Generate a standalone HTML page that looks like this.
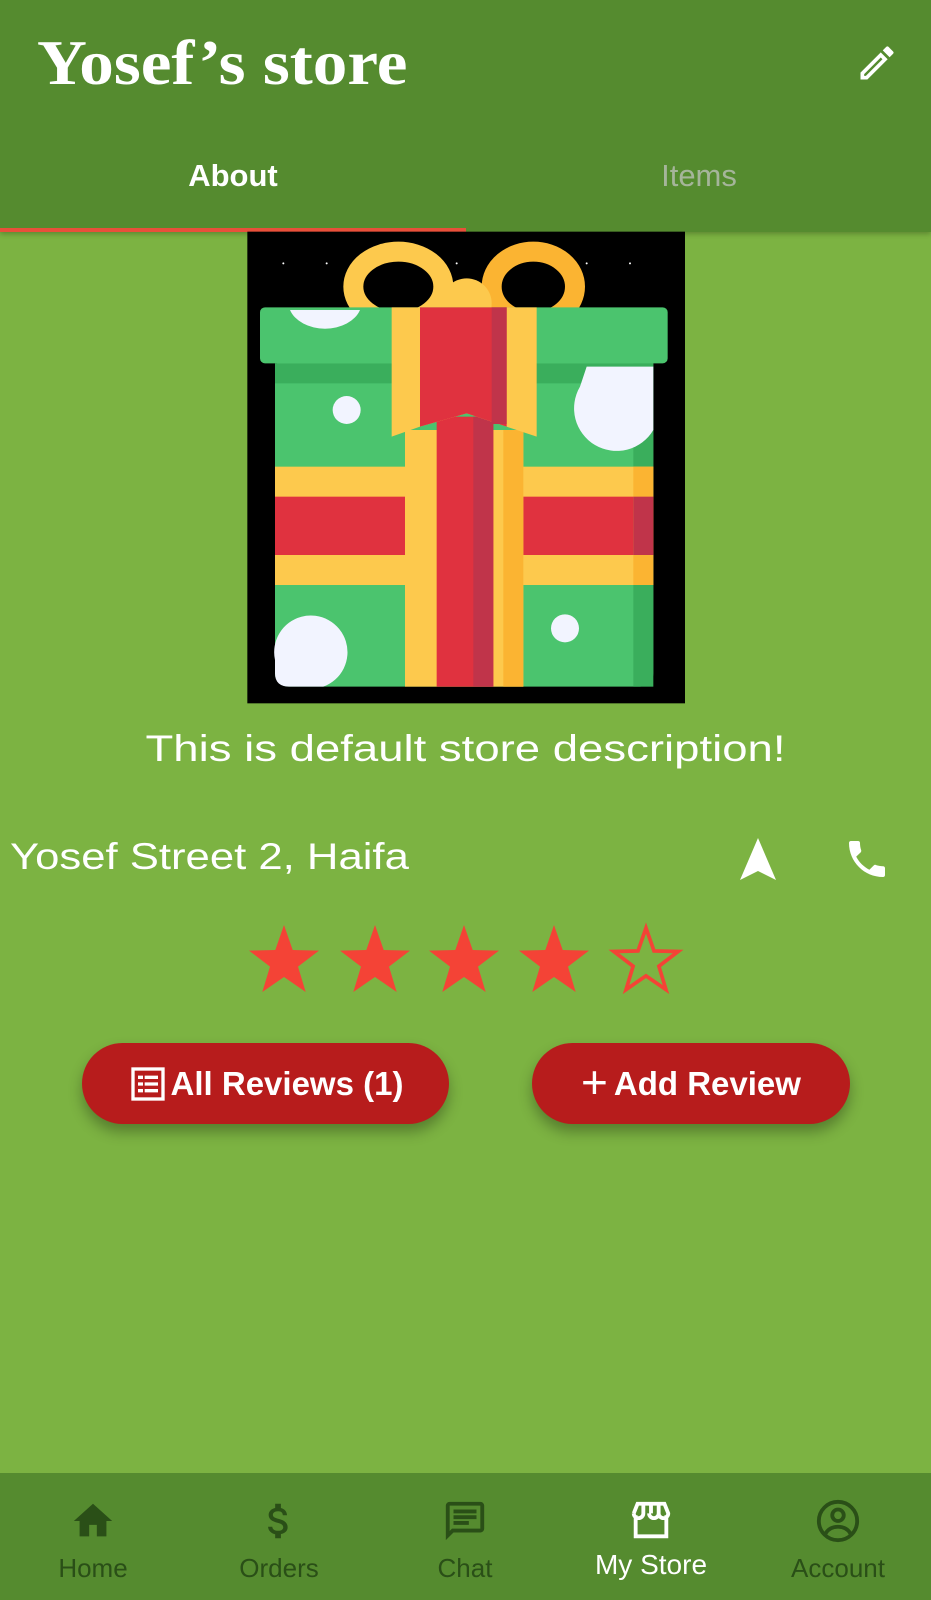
<!DOCTYPE html>
<html><head><meta charset="utf-8">
<style>
*{margin:0;padding:0;box-sizing:border-box}
body{width:931px;height:1600px;background:#7cb342;position:relative;overflow:hidden;font-family:"Liberation Sans",sans-serif;color:#fff}
.hdr{position:absolute;left:0;top:0;width:931px;height:232px;background:#558b2f;box-shadow:0 2px 5px rgba(0,0,0,.25)}
.title{position:absolute;left:37px;top:26px;font-family:"Liberation Serif",serif;font-weight:bold;font-size:64px;letter-spacing:0;white-space:nowrap;transform:scaleX(1.08);transform-origin:left}
.tab{position:absolute;top:158px;font-size:31px;font-weight:bold;width:466px;text-align:center}
.ind{position:absolute;left:0;top:228px;width:466px;height:4px;background:#e8503a}
.abs{position:absolute;white-space:nowrap}
.btn{position:absolute;height:81px;border-radius:41px;background:#b71c1c;box-shadow:0 8px 14px rgba(0,0,0,.3);font-size:33px;display:flex;align-items:center;justify-content:center;font-weight:bold}
.nav{position:absolute;left:0;top:1473px;width:931px;height:127px;background:#558b2f}
.ni{position:absolute;top:0;width:186px;text-align:center;color:#2a4f17}
.ni span{position:absolute;left:0;width:186px;top:80px;font-size:26px}
.ni svg{position:absolute;left:70px;top:25px}
</style></head><body>
<div class="hdr">
<div class="title">Yosef’s store</div>
<svg class="abs" style="left:855px;top:41px" width="44" height="44" viewBox="0 0 24 24"><path fill="#fff" d="M3 17.25V21h3.75L17.81 9.94l-3.75-3.75L3 17.25zM5.92 19H5v-.92l9.06-9.06.92.92L5.92 19zM20.71 5.63l-2.34-2.34a1 1 0 0 0-1.41 0l-1.83 1.83 3.75 3.75 1.83-1.83a1 1 0 0 0 0-1.41z"/></svg>
<div class="tab" style="left:0">About</div>
<div class="tab" style="left:466px;color:#a5b59a;font-weight:normal">Items</div>
<div class="ind"></div>
</div>

<svg class="abs" style="left:240px;top:230px" width="450" height="480" viewBox="0 0 1350 1440">
<rect x="22" y="5" width="1313" height="1415" fill="#000"/>
<g fill="#fff"><circle cx="130" cy="100" r="3"/><circle cx="260" cy="100" r="3"/><circle cx="650" cy="100" r="3"/><circle cx="1040" cy="100" r="3"/><circle cx="1170" cy="100" r="3"/></g>
<ellipse cx="475" cy="170" rx="135" ry="105" fill="none" stroke="#fdc94d" stroke-width="60"/>
<ellipse cx="880" cy="170" rx="125" ry="105" fill="none" stroke="#fbb432" stroke-width="60"/>
<circle cx="680" cy="220" r="75" fill="#fdc94d"/>
<rect x="105" y="380" width="1135" height="990" rx="40" fill="#4bc46e"/>
<rect x="1180" y="380" width="60" height="990" fill="#3aae5c"/>
<rect x="105" y="400" width="1135" height="60" fill="#3aae5c"/>
<rect x="60" y="232" width="1223" height="168" rx="15" fill="#4bc46e"/>
<path d="M150 240 A110 80 0 0 0 360 240Z" fill="#f2f4ff"/>
<path d="M1020 470 A110 110 0 0 0 1240 600 V410 H1040Z" fill="#f2f4ff"/>
<circle cx="320" cy="540" r="42" fill="#f2f4ff"/>
<circle cx="975" cy="1195" r="42" fill="#f2f4ff"/>
<path d="M105 1290 A110 110 0 1 1 250 1370 H150 Q105 1370 105 1330Z" fill="#f2f4ff"/>
<rect x="105" y="710" width="1135" height="355" fill="#fdc94d"/>
<rect x="105" y="800" width="1135" height="175" fill="#e0323f"/>
<rect x="1180" y="710" width="60" height="355" fill="#fbb432"/>
<rect x="1180" y="800" width="60" height="175" fill="#c0344a"/>
<rect x="495" y="600" width="355" height="770" fill="#fdc94d"/>
<rect x="790" y="600" width="60" height="770" fill="#fbb432"/>
<rect x="590" y="560" width="170" height="810" fill="#e0323f"/>
<rect x="700" y="560" width="60" height="810" fill="#c0344a"/>
<path d="M455 232 H890 V620 L800 590 L680 550 L540 590 L455 620Z" fill="#fdc94d"/>
<path d="M540 232 H800 V590 L680 550 L540 590Z" fill="#e0323f"/>
<rect x="755" y="232" width="45" height="350" fill="#c0344a"/>
</svg>

<div class="abs" style="left:0;width:931px;text-align:center;top:728px;font-size:37px;transform:scaleX(1.23)">This is default store description!</div>
<div class="abs" style="left:10px;top:836px;font-size:37px;transform:scaleX(1.18);transform-origin:left">Yosef Street 2, Haifa</div>
<svg class="abs" style="left:740px;top:838px" width="36" height="42" viewBox="0 0 36 42"><path fill="#fff" d="M18 0 L36 42 L18 33 L0 42Z"/></svg>
<svg class="abs" style="left:843px;top:835px" width="48" height="48" viewBox="0 0 24 24"><path fill="#fff" d="M6.6 10.8c1.4 2.8 3.8 5.1 6.6 6.6l2.2-2.2c.3-.3.7-.4 1-.2 1.1.4 2.3.6 3.6.6.6 0 1 .4 1 1V20c0 .6-.4 1-1 1C10.6 21 3 13.4 3 4c0-.6.4-1 1-1h3.5c.6 0 1 .4 1 1 0 1.3.2 2.5.6 3.6.1.3 0 .7-.2 1L6.6 10.8z"/></svg>

<svg class="abs" style="left:240px;top:922px" width="450" height="76" viewBox="0 0 450 76">
<defs><path id="s" d="M0 -37 L8.7 -12 L35 -11.4 L14 4.6 L21.7 30 L0 15 L-21.7 30 L-14 4.6 L-35 -11.4 L-8.7 -12Z"/></defs>
<g fill="#f44336"><use href="#s" x="44" y="40"/><use href="#s" x="135" y="40"/><use href="#s" x="224" y="40"/><use href="#s" x="314" y="40"/></g>
<use href="#s" x="406" y="40" fill="none" stroke="#f44336" stroke-width="4" transform="translate(406 40) scale(.92) translate(-406 -40)"/>
</svg>

<div class="btn" style="left:82px;top:1043px;width:367px"><svg width="40" height="40" viewBox="0 0 24 24" style="margin-right:3px"><rect x="3" y="3" width="18" height="18" fill="none" stroke="#fff" stroke-width="2"/><path fill="#fff" d="M6 7h3v2H6zM10 7h8v2h-8zM6 11h3v2H6zM10 11h8v2h-8zM6 15h3v2H6zM10 15h8v2h-8z"/></svg>All Reviews (1)</div>
<div class="btn" style="left:532px;top:1043px;width:318px"><span style="font-size:46px;font-weight:normal;margin-right:6px;margin-top:-4px">+</span>Add Review</div>

<div class="nav">
<div class="ni" style="left:0"><svg width="46" height="46" viewBox="0 0 24 24"><path fill="#2a4f17" d="M10 20v-6h4v6h5v-8h3L12 3 2 12h3v8z"/></svg><span>Home</span></div>
<div class="ni" style="left:186px"><svg width="46" height="46" viewBox="0 0 24 24"><path fill="#2a4f17" d="M11.8 10.9c-2.3-.6-3-1.2-3-2.1 0-1.1 1-1.9 2.7-1.9 1.8 0 2.4.8 2.5 2.1h2.2c-.1-1.7-1.1-3.300-3.2-3.8V3h-3v2.2C8.1 5.6 6.6 6.9 6.6 8.8c0 2.3 1.900 3.4 4.600 4.1 2.5.6 3 1.5 3 2.4 0 .7-.5 1.8-2.7 1.8-2.1 0-2.9-.9-3-2.1H6.3c.1 2.2 1.8 3.500 3.700 3.9V21h3v-2.2c1.9-.4 3.5-1.5 3.5-3.5 0-2.8-2.4-3.8-4.7-4.4z"/></svg><span>Orders</span></div>
<div class="ni" style="left:372px"><svg width="46" height="46" viewBox="0 0 24 24"><path fill="#2a4f17" d="M20 2H4c-1.1 0-2 .9-2 2v18l4-4h14c1.1 0 2-.9 2-2V4c0-1.1-.9-2-2-2zm0 14H5.2L4 17.2V4h16v12zM6 12h8v2H6zm0-3h12v2H6zm0-3h12v2H6z"/></svg><span>Chat</span></div>
<div class="ni" style="left:558px;color:#fff"><svg width="46" height="46" viewBox="0 0 24 24"><path fill="none" stroke="#fff" stroke-width="2" d="M4 9v11h16V9M3 8l2-5h14l2 5c0 1.5-1.2 2.5-2.5 2.5S16 9.5 16 8c0 1.5-1.2 2.5-2.5 2.5S11 9.5 11 8M3 8c0 1.5 1.2 2.5 2.5 2.5S8 9.5 8 8M8 3v5M12 3v5M16 3v5"/></svg><span style="top:76px;font-size:28px">My Store</span></div>
<div class="ni" style="left:745px"><svg width="46" height="46" viewBox="0 0 24 24"><circle cx="12" cy="12" r="10" fill="none" stroke="#2a4f17" stroke-width="2"/><circle cx="12" cy="9" r="3" fill="none" stroke="#2a4f17" stroke-width="2"/><path d="M5.5 18.5C7 16 9.5 15 12 15s5 1 6.5 3.5" fill="none" stroke="#2a4f17" stroke-width="2"/></svg><span>Account</span></div>
</div>
</body></html>
